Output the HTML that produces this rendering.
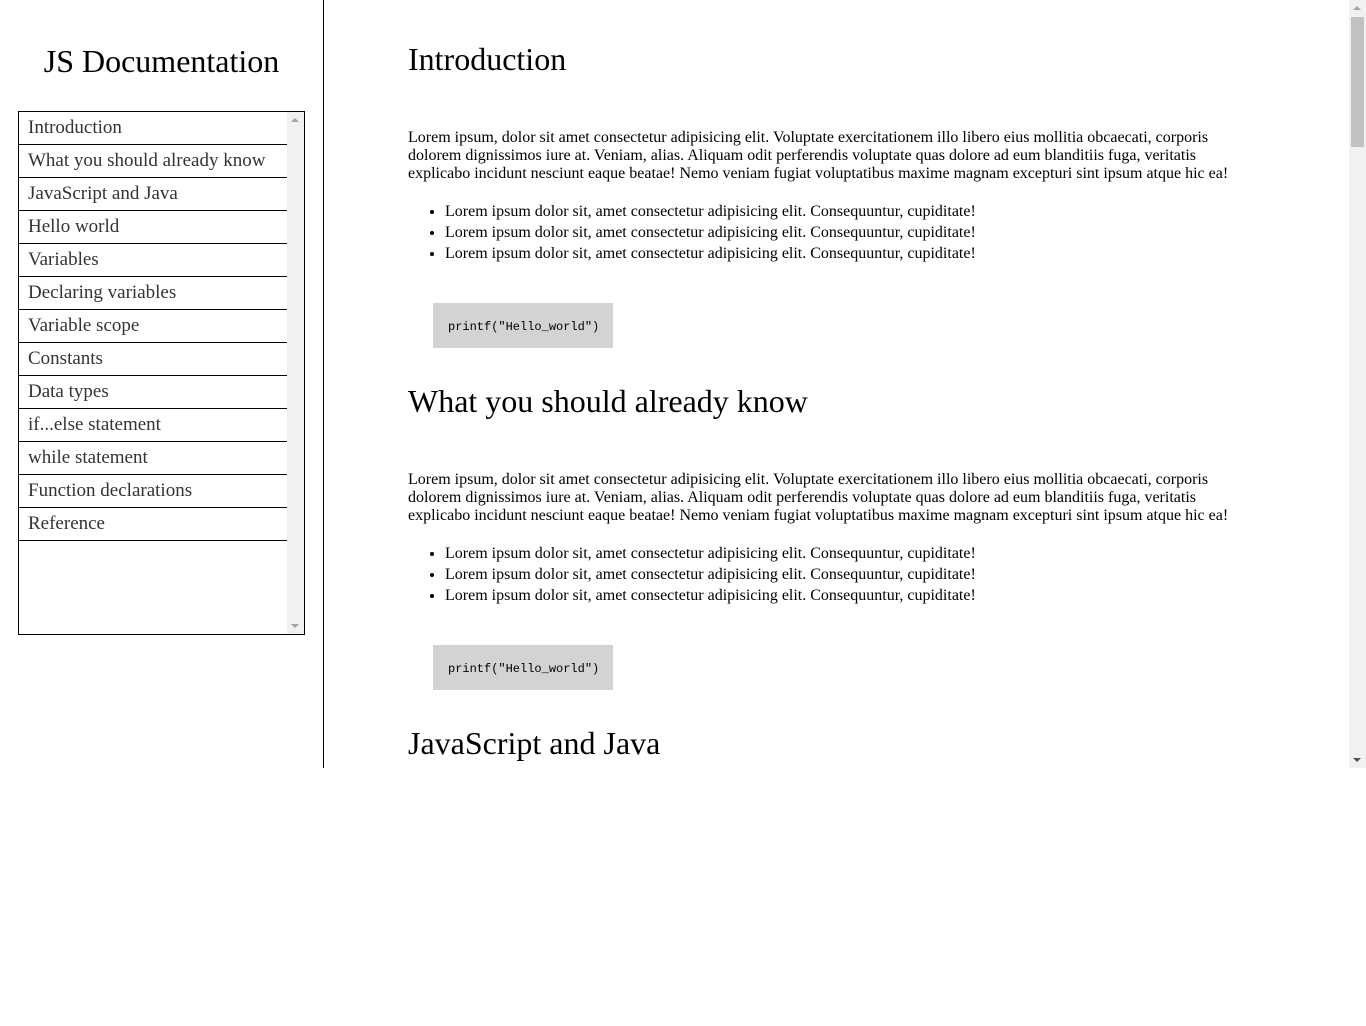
<!DOCTYPE html>
<html><head><meta charset="utf-8"><style>
html,body{margin:0;padding:0;}
body{width:1366px;height:768px;overflow:hidden;position:relative;font-family:"Liberation Serif",serif;color:#000;background:#fff;}
#side{position:absolute;left:0;top:0;width:323px;height:768px;border-right:1px solid #000;}
#side h1{position:absolute;left:0;width:323px;top:42px;margin:0;text-align:center;font-weight:normal;font-size:32px;line-height:38px;}
#nav{position:absolute;left:18px;top:111px;width:285px;height:522px;border:1px solid #000;overflow:hidden;}
#nav .sb{position:absolute;right:0;top:0;width:17px;height:522px;background:#f1f1f1;}
#nav .up{position:absolute;right:5px;top:6px;border-left:4px solid transparent;border-right:4px solid transparent;border-bottom:4px solid #a3a3a3;}
#nav .dn{position:absolute;right:5px;bottom:6px;border-left:4px solid transparent;border-right:4px solid transparent;border-top:4px solid #a3a3a3;}
#nav a{display:block;width:259px;height:32px;border-bottom:1px solid #000;padding-left:9px;font-size:19px;line-height:32px;color:#333;text-decoration:none;white-space:nowrap;}
#main{position:absolute;left:408px;top:0;width:830px;}
.sec{position:absolute;left:0;width:830px;height:342px;}
.sec h2{position:absolute;top:40px;left:0;margin:0;font-weight:normal;font-size:32px;line-height:38px;}
.sec p{position:absolute;top:129px;left:0;margin:0;font-size:16px;line-height:18px;width:830px;}
.sec ul{position:absolute;top:201px;left:0;margin:0;padding-left:37px;font-size:16px;line-height:21px;}
.sec pre{position:absolute;top:303px;left:25px;margin:0;width:180px;height:45px;background:#d3d3d3;font-family:"Liberation Mono",monospace;font-size:12px;line-height:49px;padding:0;box-sizing:border-box;padding-left:15px;}
#vs{position:absolute;right:0;top:0;width:17px;height:768px;background:#f1f1f1;}
#vs .th{position:absolute;left:2px;top:17px;width:13px;height:130px;background:#c1c1c1;}
#vs .up{position:absolute;left:4px;top:6px;border-left:4px solid transparent;border-right:4px solid transparent;border-bottom:4px solid #a3a3a3;}
#vs .dn{position:absolute;left:4px;bottom:6px;border-left:4px solid transparent;border-right:4px solid transparent;border-top:4px solid #505050;}
</style></head><body>
<div id="side"><h1>JS Documentation</h1>
<div id="nav"><div class="sb"><div class="up"></div><div class="dn"></div></div>
<a>Introduction</a><a>What you should already know</a><a>JavaScript and Java</a><a>Hello world</a><a>Variables</a><a>Declaring variables</a><a>Variable scope</a><a>Constants</a><a>Data types</a><a>if...else statement</a><a>while statement</a><a>Function declarations</a><a>Reference</a>
</div></div>
<div id="main">
<div class="sec" style="top:0"><h2>Introduction</h2>
<p>Lorem ipsum, dolor sit amet consectetur adipisicing elit. Voluptate exercitationem illo libero eius mollitia obcaecati, corporis dolorem dignissimos iure at. Veniam, alias. Aliquam odit perferendis voluptate quas dolore ad eum blanditiis fuga, veritatis explicabo incidunt nesciunt eaque beatae! Nemo veniam fugiat voluptatibus maxime magnam excepturi sint ipsum atque hic ea!</p>
<ul><li>Lorem ipsum dolor sit, amet consectetur adipisicing elit. Consequuntur, cupiditate!</li><li>Lorem ipsum dolor sit, amet consectetur adipisicing elit. Consequuntur, cupiditate!</li><li>Lorem ipsum dolor sit, amet consectetur adipisicing elit. Consequuntur, cupiditate!</li></ul>
<pre>printf("Hello_world")</pre></div>
<div class="sec" style="top:342px"><h2>What you should already know</h2>
<p>Lorem ipsum, dolor sit amet consectetur adipisicing elit. Voluptate exercitationem illo libero eius mollitia obcaecati, corporis dolorem dignissimos iure at. Veniam, alias. Aliquam odit perferendis voluptate quas dolore ad eum blanditiis fuga, veritatis explicabo incidunt nesciunt eaque beatae! Nemo veniam fugiat voluptatibus maxime magnam excepturi sint ipsum atque hic ea!</p>
<ul><li>Lorem ipsum dolor sit, amet consectetur adipisicing elit. Consequuntur, cupiditate!</li><li>Lorem ipsum dolor sit, amet consectetur adipisicing elit. Consequuntur, cupiditate!</li><li>Lorem ipsum dolor sit, amet consectetur adipisicing elit. Consequuntur, cupiditate!</li></ul>
<pre>printf("Hello_world")</pre></div>
<div class="sec" style="top:684px"><h2>JavaScript and Java</h2></div>
</div>
<div id="vs"><div class="up"></div><div class="th"></div><div class="dn"></div></div>
</body></html>
